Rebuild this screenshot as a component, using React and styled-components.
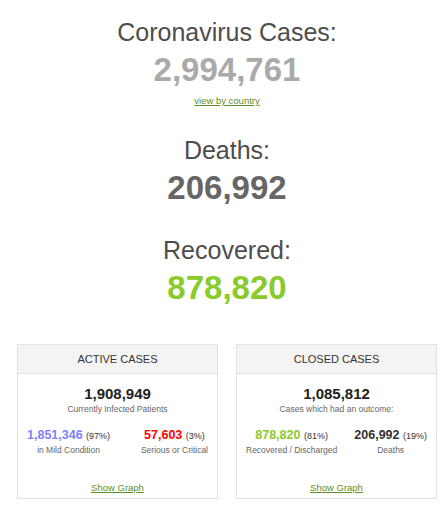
import React from "react";
import styled, { createGlobalStyle } from "styled-components";

const GlobalStyle = createGlobalStyle`
  body {
    margin: 0;
    background: #fff;
    font-family: "Liberation Sans", Arial, sans-serif;
  }
`;

export const Page = styled.div`
  width: 420px;
  margin-left: 17px;
  padding-top: 17px;
`;

export const Counter = styled.div`
  text-align: center;
  margin-top: ${(props) => (props.first ? "0" : "27px")};
`;

export const CounterTitle = styled.h1`
  margin: 0;
  font-size: 25px;
  line-height: 30px;
  font-weight: normal;
  color: #4d4d4d;
`;

export const CounterNumber = styled.div`
  margin-top: 3px;
  font-size: 33px;
  line-height: 40px;
  font-weight: bold;
  color: ${(props) => props.color || "#aaa"};
`;

export const SmallLink = styled.a`
  display: inline-block;
  margin-top: 3px;
  font-size: 9.5px;
  line-height: 12px;
  color: #5f8f2a;
  text-decoration: underline;
`;

export const Panels = styled.div`
  display: flex;
  justify-content: space-between;
  margin-top: 36px;
`;

export const Panel = styled.div`
  width: 199px;
  border: 1px solid #e2e2e2;
  box-shadow: 0 1px 1px rgba(0, 0, 0, 0.06);
  background: #fff;
`;

export const PanelHeading = styled.div`
  height: 28px;
  display: flex;
  align-items: center;
  justify-content: center;
  background: #f4f4f4;
  border-bottom: 1px solid #e2e2e2;
  font-size: 11px;
  color: #333;
  text-transform: uppercase;
`;

export const PanelBody = styled.div`
  padding: 11px 9px 4px;
  text-align: center;
`;

export const BigNumber = styled.div`
  font-size: 15px;
  line-height: 18px;
  font-weight: bold;
  color: #222;
`;

export const Caption = styled.div`
  font-size: 8.5px;
  line-height: ${(props) => (props.tight ? "12px" : "13px")};
  color: #666;
`;

export const Split = styled.div`
  display: flex;
  justify-content: space-between;
  margin-top: 12px;
`;

export const Column = styled.div`
  text-align: center;
`;

export const ColNumber = styled.div`
  font-size: 12.5px;
  line-height: 15px;
  font-weight: bold;
  color: ${(props) => props.color || "#333"};
`;

export const Percent = styled.span`
  font-size: 9px;
  font-weight: normal;
  color: #333;
`;

export const GraphLink = styled.a`
  display: block;
  margin-top: 26px;
  font-size: 9.5px;
  line-height: 12px;
  color: #5f8f2a;
  text-decoration: underline;
`;

const counters = [
  { title: "Coronavirus Cases:", value: "2,994,761", color: "#aaa", link: true },
  { title: "Deaths:", value: "206,992", color: "#666" },
  { title: "Recovered:", value: "878,820", color: "#8aca2b" },
];

const panels = [
  {
    heading: "Active Cases",
    total: "1,908,949",
    caption: "Currently Infected Patients",
    left: { value: "1,851,346", pct: "97%", label: "in Mild Condition", color: "#8080ff" },
    right: { value: "57,603", pct: "3%", label: "Serious or Critical", color: "#ff0000" },
  },
  {
    heading: "Closed Cases",
    total: "1,085,812",
    caption: "Cases which had an outcome:",
    left: { value: "878,820", pct: "81%", label: "Recovered / Discharged", color: "#8aca2b" },
    right: { value: "206,992", pct: "19%", label: "Deaths", color: "#333" },
  },
];

const Stat = ({ item }) => (
  <Column>
    <ColNumber color={item.color}>
      {item.value} <Percent>({item.pct})</Percent>
    </ColNumber>
    <Caption tight>{item.label}</Caption>
  </Column>
);

const App = () => {
  return (
    <>
      <GlobalStyle />
      <Page>
        {counters.map((c, i) => (
          <Counter key={i} first={i === 0}>
            <CounterTitle>{c.title}</CounterTitle>
            <CounterNumber color={c.color}>{c.value}</CounterNumber>
            {c.link && <SmallLink href="#countries">view by country</SmallLink>}
          </Counter>
        ))}
        <Panels>
          {panels.map((p, i) => (
            <Panel key={i}>
              <PanelHeading>{p.heading}</PanelHeading>
              <PanelBody>
                <BigNumber>{p.total}</BigNumber>
                <Caption>{p.caption}</Caption>
                <Split>
                  <Stat item={p.left} />
                  <Stat item={p.right} />
                </Split>
                <GraphLink href="#graph">Show Graph</GraphLink>
              </PanelBody>
            </Panel>
          ))}
        </Panels>
      </Page>
    </>
  );
};

export default App;
